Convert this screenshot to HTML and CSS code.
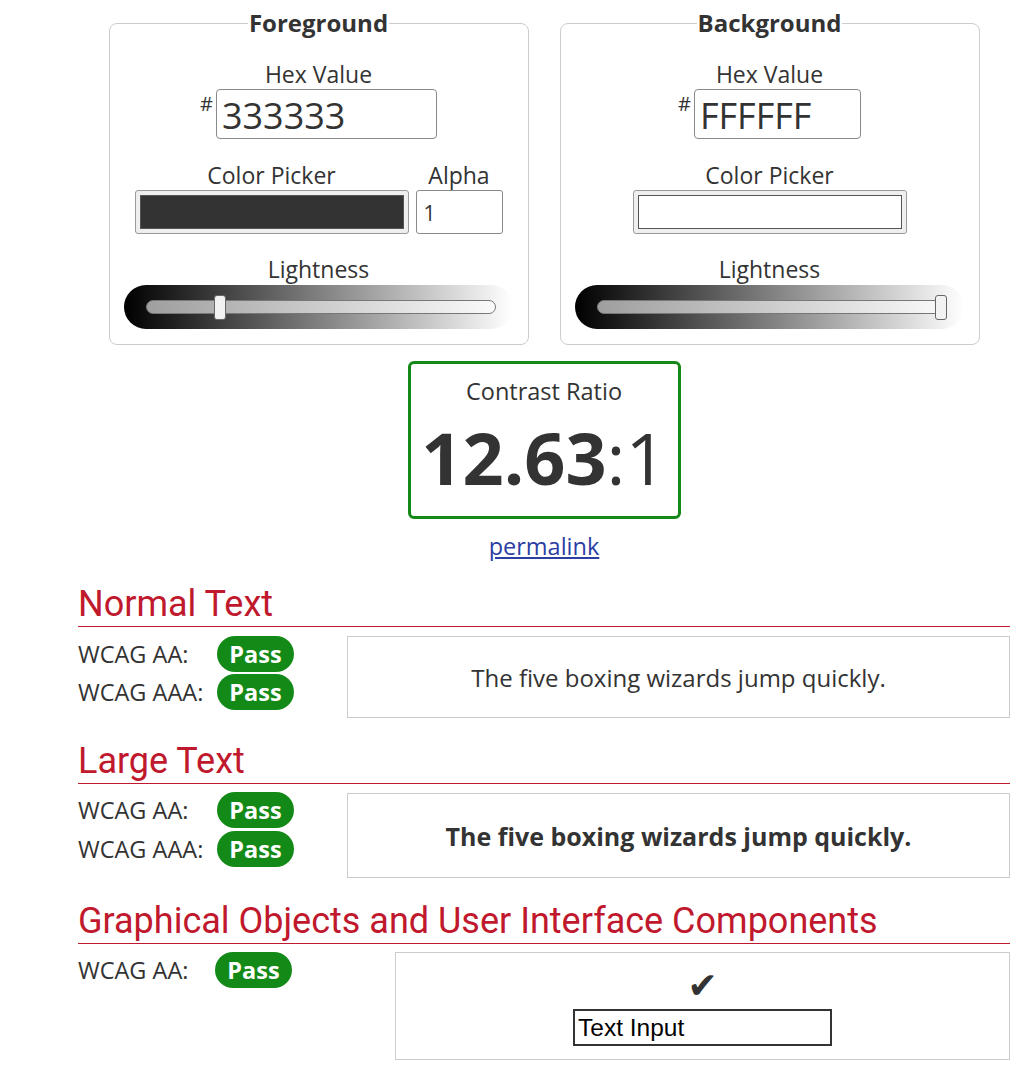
FILE: index.html
```html
<!DOCTYPE html>
<html lang="en">
<head>
<meta charset="utf-8">
<title>Contrast Checker</title>
<link rel="stylesheet" href="styles.css">
</head>
<body>
<main class="page">
  <div class="pickers">
    <fieldset class="colorset">
      <legend class="legend">Foreground</legend>
      <div class="label label-hex">Hex Value</div>
      <div class="hexrow">
        <span class="hash">#</span>
        <div class="hexinput hex-fg">333333</div>
      </div>
      <div class="pickrow">
        <div class="pickcol">
          <div class="label">Color Picker</div>
          <div class="swatch swatch-fg"><div class="swatch-inner dark"></div></div>
        </div>
        <div class="pickcol">
          <div class="label">Alpha</div>
          <div class="alpha">1</div>
        </div>
      </div>
      <div class="label label-light">Lightness</div>
      <div class="slider">
        <div class="track">
          <div class="thumb thumb-fg"></div>
        </div>
      </div>
    </fieldset>
    <fieldset class="colorset">
      <legend class="legend">Background</legend>
      <div class="label label-hex">Hex Value</div>
      <div class="hexrow">
        <span class="hash">#</span>
        <div class="hexinput hex-bg">FFFFFF</div>
      </div>
      <div class="pickrow">
        <div class="pickcol">
          <div class="label">Color Picker</div>
          <div class="swatch swatch-bg"><div class="swatch-inner light"></div></div>
        </div>
      </div>
      <div class="label label-light">Lightness</div>
      <div class="slider">
        <div class="track">
          <div class="thumb thumb-bg"></div>
        </div>
      </div>
    </fieldset>
  </div>

  <div class="ratio-wrap">
    <div class="ratio">
      <div class="ratio-title">Contrast Ratio</div>
      <div class="ratio-num"><b>12.63</b>:1</div>
    </div>
    <a class="permalink" href="#">permalink</a>
  </div>

  <section class="result">
    <h2 class="result-title">Normal Text</h2>
    <div class="result-body cols-normal">
      <div class="checks">
        <div class="check"><span class="wcag">WCAG AA:</span><span class="pass">Pass</span></div>
        <div class="check"><span class="wcag">WCAG AAA:</span><span class="pass">Pass</span></div>
      </div>
      <div class="sample sample-normal">The five boxing wizards jump quickly.</div>
    </div>
  </section>

  <section class="result">
    <h2 class="result-title">Large Text</h2>
    <div class="result-body cols-normal">
      <div class="checks checks-large">
        <div class="check"><span class="wcag">WCAG AA:</span><span class="pass">Pass</span></div>
        <div class="check"><span class="wcag">WCAG AAA:</span><span class="pass">Pass</span></div>
      </div>
      <div class="sample sample-large">The five boxing wizards jump quickly.</div>
    </div>
  </section>

  <section class="result">
    <h2 class="result-title">Graphical Objects and User Interface Components</h2>
    <div class="result-body cols-graphic">
      <div class="checks">
        <div class="check"><span class="wcag wcag-g">WCAG AA:</span><span class="pass">Pass</span></div>
      </div>
      <div class="sample sample-graphic">
        <span class="tick">&#10004;</span>
        <div class="textinput">Text Input</div>
      </div>
    </div>
  </section>
</main>
</body>
</html>
```

FILE: styles.css
```css
* { box-sizing: border-box; }

html, body {
  margin: 0;
  padding: 0;
  background: #fff;
}

body {
  font-family: "Open Sans", "DejaVu Sans", sans-serif;
  color: #333;
}

.page {
  width: 932px;
  margin-left: 78px;
  padding-top: 8px;
}

/* ---------- colour pickers ---------- */
.pickers {
  display: flex;
  justify-content: center;
  gap: 31px;
}

.colorset {
  width: 420px;
  margin: 0;
  padding: 0 0 15px;
  border: 1px solid #ccc;
  border-radius: 8px;
  display: flex;
  flex-direction: column;
  align-items: center;
}

.legend {
  margin: 0 auto;
  padding: 0 1px;
  font-size: 24px;
  line-height: 30px;
  font-weight: 700;
}

.label {
  font-size: 23px;
  line-height: 28px;
  text-align: center;
}

.label-hex { margin-top: 22px; }

.hexrow {
  display: flex;
  align-items: flex-start;
  margin-top: 1px;
}

.hash {
  font-size: 20px;
  line-height: 20px;
  margin-top: 5px;
  margin-right: 3px;
}

.hexinput {
  height: 50px;
  border: 1px solid #8a8a8a;
  border-radius: 4px;
  font-size: 36px;
  line-height: 52px;
  padding-left: 5px;
}

.hex-fg { width: 221px; }
.hex-bg { width: 167px; }

.pickrow {
  display: flex;
  gap: 7px;
  margin-top: 22px;
}

.pickcol {
  display: flex;
  flex-direction: column;
  align-items: center;
}

.swatch {
  width: 274px;
  height: 44px;
  border: 1px solid #9a9a9a;
  border-radius: 3px;
  background: #efefef;
  padding: 4px;
  margin-top: 1px;
}

.swatch-inner {
  width: 100%;
  height: 100%;
  border: 1px solid #555;
}

.swatch-inner.dark { background: #333; }
.swatch-inner.light { background: #fff; }

.alpha {
  width: 87px;
  height: 44px;
  margin-top: 1px;
  border: 1px solid #8a8a8a;
  border-radius: 3px;
  font-size: 21px;
  line-height: 44px;
  padding-left: 7px;
}

.label-light { margin-top: 21px; }

.slider {
  width: 389px;
  height: 44px;
  margin-top: 2px;
  border-radius: 22px;
  background: linear-gradient(to right, #000 0%, #fff 100%);
  padding: 15px 17px 0 22px;
}

.track {
  position: relative;
  height: 14px;
  border: 1px solid #777;
  border-radius: 7px;
  background: rgba(255, 255, 255, 0.6);
}

.thumb {
  position: absolute;
  top: -6px;
  width: 12px;
  height: 25px;
  border: 1px solid #666;
  border-radius: 3px;
  background: #f2f2f2;
}

.thumb-fg { left: 67px; }
.thumb-bg { right: -1px; }

/* ---------- ratio ---------- */
.ratio-wrap {
  display: flex;
  flex-direction: column;
  align-items: center;
  margin-top: 16px;
}

.ratio {
  width: 273px;
  height: 158px;
  border: 3px solid #138a17;
  border-radius: 6px;
  padding-top: 13px;
  text-align: center;
}

.ratio-title {
  font-size: 23.5px;
  line-height: 28px;
}

.ratio-num {
  margin-top: 12px;
  font-size: 72px;
  line-height: 80px;
}

.ratio-num b { font-weight: 700; }

.permalink {
  margin-top: 12px;
  font-size: 23.5px;
  line-height: 30px;
  color: #2c3ea4;
  text-decoration: underline;
}

/* ---------- results ---------- */
.result-title {
  margin: 23px 0 0;
  padding-bottom: 2px;
  font-family: Roboto, "Liberation Sans", sans-serif;
  font-weight: 400;
  font-size: 36px;
  line-height: 40px;
  color: #c0182c;
  border-bottom: 1px solid #c0182c;
}

.result-body {
  display: grid;
  margin-top: 9px;
}

.cols-normal { grid-template-columns: 269px 1fr; }
.cols-graphic {
  grid-template-columns: 317px 1fr;
  margin-top: 8px;
}

.checks {
  display: flex;
  flex-direction: column;
  gap: 2px;
}

.checks-large {
  margin-top: -1px;
  gap: 3px;
}

.check {
  display: flex;
  align-items: center;
}

.wcag {
  width: 139px;
  font-size: 23.5px;
  line-height: 36px;
}

.wcag-g { width: 137px; }

.pass {
  display: inline-block;
  width: 77px;
  height: 36px;
  border-radius: 18px;
  background: #138a17;
  color: #fff;
  font-weight: 700;
  font-size: 23.5px;
  line-height: 36px;
  text-align: center;
}

.sample {
  border: 1px solid #ccc;
  display: flex;
  align-items: center;
  justify-content: center;
  font-size: 24px;
}

.sample-normal { height: 82px; }

.sample-large {
  height: 85px;
  font-weight: 700;
  font-size: 25px;
}

.sample-graphic {
  height: 108px;
  flex-direction: column;
  justify-content: flex-start;
  padding-top: 12px;
}

.tick {
  font-family: "DejaVu Sans", sans-serif;
  font-size: 36px;
  line-height: 42px;
  color: #333;
}

.textinput {
  margin-top: 2px;
  width: 259px;
  height: 37px;
  border: 2px solid #333;
  font-family: "Liberation Sans", Arial, sans-serif;
  font-size: 24.5px;
  line-height: 33px;
  color: #000;
  padding-left: 3px;
}
```
